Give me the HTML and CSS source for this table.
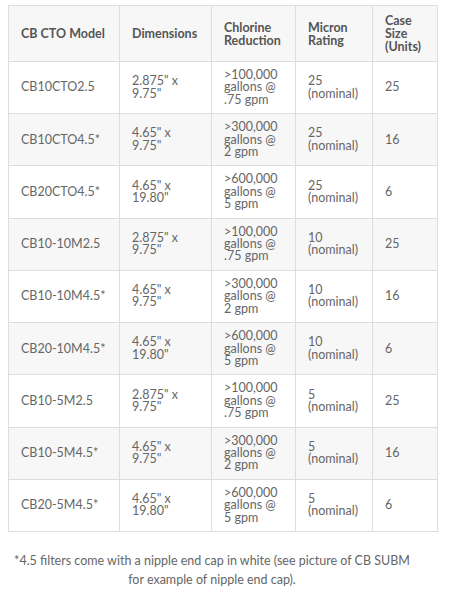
FILE: index.html
```html
<!DOCTYPE html>
<html>
<head>
<meta charset="utf-8">
<link rel="stylesheet" href="styles.css">
</head>
<body>
<div class="wrap">
<table class="spec">
<colgroup>
<col class="c1"><col class="c2"><col class="c3"><col class="c4"><col class="c5">
</colgroup>
<thead>
<tr><th>CB CTO Model</th><th>Dimensions</th><th>Chlorine Reduction</th><th>Micron Rating</th><th>Case Size (Units)</th></tr>
</thead>
<tbody>
<tr><td>CB10CTO2.5</td><td>2.875" x 9.75"</td><td>&gt;100,000 gallons @ .75 gpm</td><td>25 (nominal)</td><td>25</td></tr>
<tr><td>CB10CTO4.5*</td><td>4.65" x 9.75"</td><td>&gt;300,000 gallons @ 2 gpm</td><td>25 (nominal)</td><td>16</td></tr>
<tr><td>CB20CTO4.5*</td><td>4.65" x 19.80"</td><td>&gt;600,000 gallons @ 5 gpm</td><td>25 (nominal)</td><td>6</td></tr>
<tr><td>CB10-10M2.5</td><td>2.875" x 9.75"</td><td>&gt;100,000 gallons @ .75 gpm</td><td>10 (nominal)</td><td>25</td></tr>
<tr><td>CB10-10M4.5*</td><td>4.65" x 9.75"</td><td>&gt;300,000 gallons @ 2 gpm</td><td>10 (nominal)</td><td>16</td></tr>
<tr><td>CB20-10M4.5*</td><td>4.65" x 19.80"</td><td>&gt;600,000 gallons @ 5 gpm</td><td>10 (nominal)</td><td>6</td></tr>
<tr><td>CB10-5M2.5</td><td>2.875" x 9.75"</td><td>&gt;100,000 gallons @ .75 gpm</td><td>5 (nominal)</td><td>25</td></tr>
<tr><td>CB10-5M4.5*</td><td>4.65" x 9.75"</td><td>&gt;300,000 gallons @ 2 gpm</td><td>5 (nominal)</td><td>16</td></tr>
<tr><td>CB20-5M4.5*</td><td>4.65" x 19.80"</td><td>&gt;600,000 gallons @ 5 gpm</td><td>5 (nominal)</td><td>6</td></tr>
</tbody>
</table>
<p class="note">*4.5 filters come with a nipple end cap in white (see picture of CB SUBM for example of nipple end cap).</p>
</div>
</body>
</html>
```

FILE: styles.css
```css
html, body {
  background: #fff;
}
body {
  margin: 5px 8px 0 8px;
  font-family: Lato, "Open Sans", sans-serif;
  color: #666;
  font-size: 13px;
}
.wrap {
  width: 429px;
}
.spec {
  border-collapse: collapse;
  table-layout: fixed;
  width: 429px;
}
.c1 { width: 111px; }
.c2 { width: 92px; }
.c3 { width: 84px; }
.c4 { width: 77px; }
.c5 { width: 65px; }
.spec th, .spec td {
  border: 1px solid #ddd;
  text-align: left;
  vertical-align: middle;
  padding: 7px 12px;
}
.spec th:first-child, .spec td:first-child {
  padding-right: 4px;
}
.spec th {
  background: #f7f7f7;
  color: #555;
  font-weight: 700;
  font-size: 12.5px;
  line-height: 13px;
  padding-top: 8px;
  padding-bottom: 8px;
  height: 39px;
}
.spec td {
  font-size: 12.5px;
  line-height: 12.4px;
  height: 37.2px;
}
.spec tbody tr:nth-child(even) td {
  background: #f7f7f7;
}
.note {
  margin: 19px 0 0 0;
  padding-right: 21px;
  font-size: 12.5px;
  text-align: center;
  line-height: 19px;
}
```
